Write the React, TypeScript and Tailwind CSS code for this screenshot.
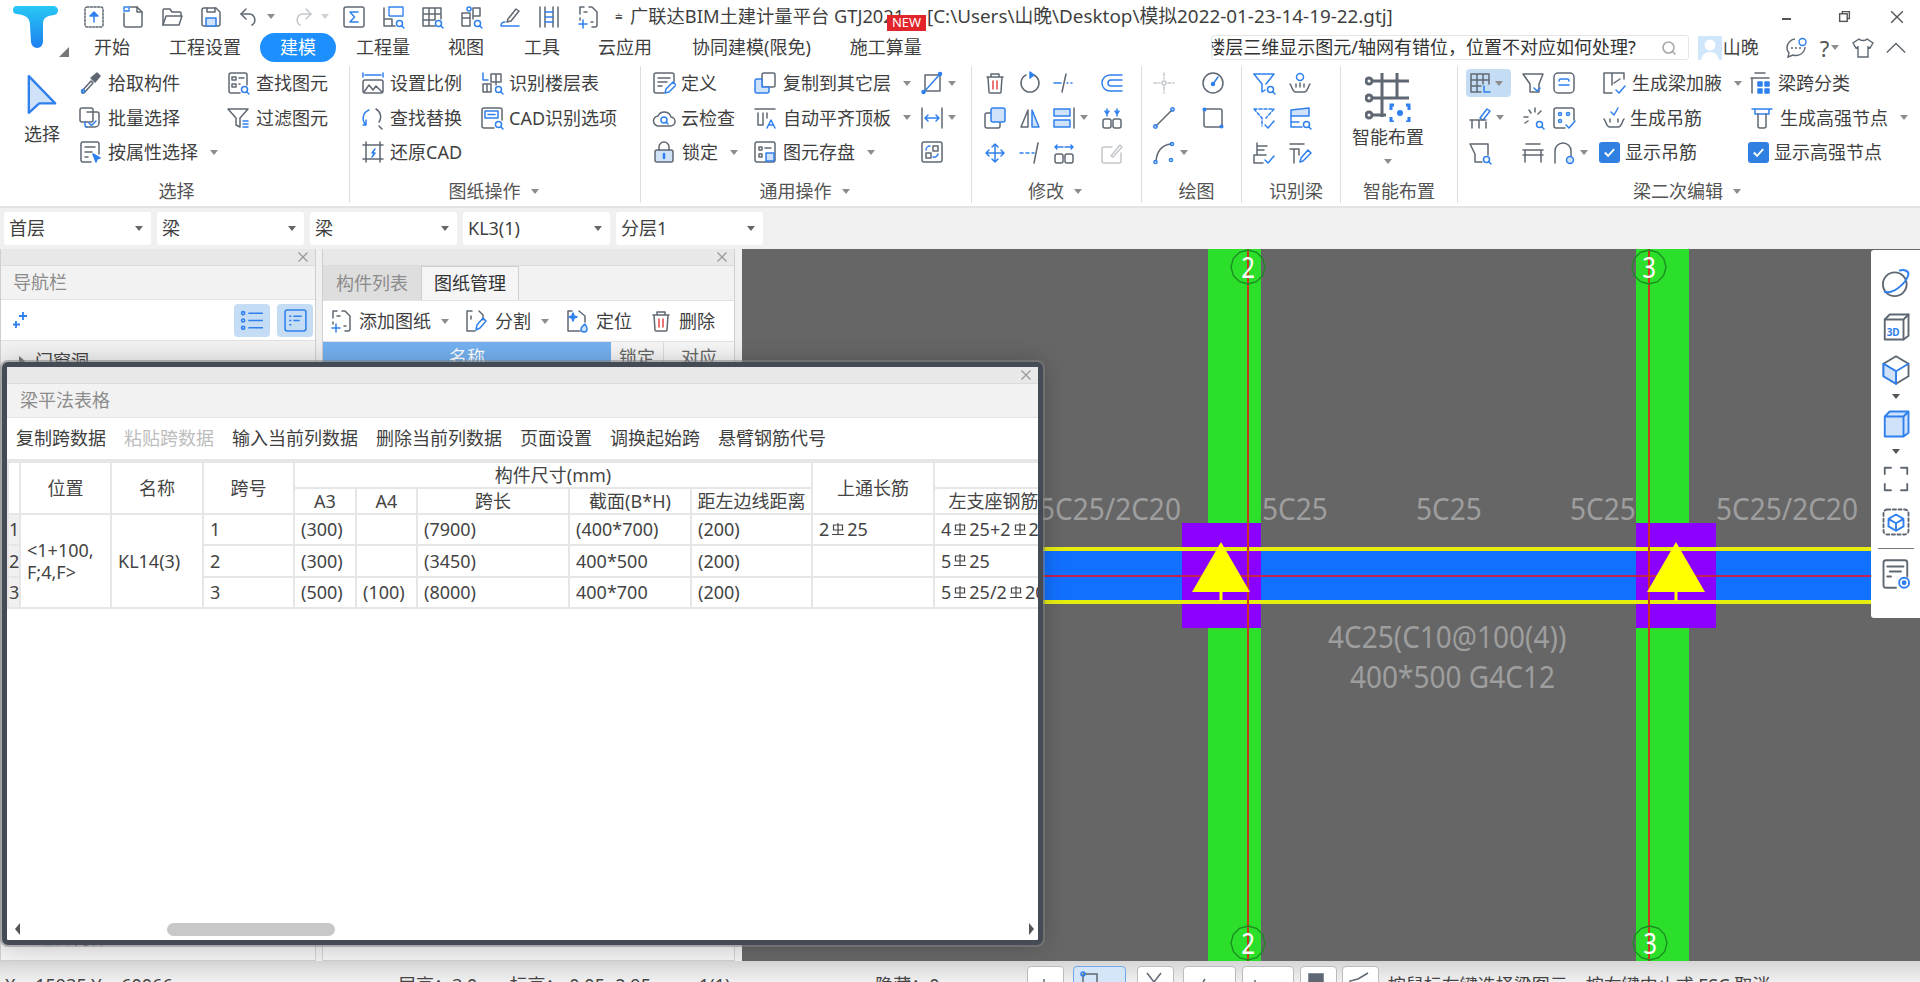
import type { ReactNode } from "react";

const BLUE = "#2f80ed";
const PALE = "#cfe2fa";
const RED = "#e5484d";

function Ic({ size = 24, children, light }: { size?: number; children: ReactNode; light?: boolean }) {
	return (
		<svg
			viewBox="0 0 24 24"
			width={size}
			height={size}
			fill="none"
			stroke={light ? "#c4c8cc" : "#5f6872"}
			strokeWidth={1.5}
			strokeLinecap="round"
			strokeLinejoin="round"
			className="shrink-0"
		>
			{children}
		</svg>
	);
}

const searchMark = (
	<>
		<circle cx="18.5" cy="18.5" r="3" stroke={BLUE} />
		<path d="M20.7 20.7L23 23" stroke={BLUE} />
	</>
);

const icons = {
	upload: (
		<>
			<rect x="3" y="2" width="18" height="20" rx="2" strokeDasharray="2 1.5" />
			<path d="M12 17V9M8 11l4-4 4 4z" stroke={BLUE} fill={BLUE} />
		</>
	),
	newDoc: (
		<>
			<path d="M9 2h7l5 5v13a2 2 0 0 1-2 2H5a2 2 0 0 1-2-2V8" />
			<path d="M16 2v5h5" />
			<rect x="3" y="2" width="5" height="4" stroke={BLUE} strokeDasharray="1 1" />
		</>
	),
	folder: (
		<>
			<path d="M3 20V5a1 1 0 0 1 1-1h6l2 3h8a1 1 0 0 1 1 1v3" />
			<path d="M3 20l3-9h16l-3 9z" />
		</>
	),
	save: (
		<>
			<path d="M5 3h12l4 4v12a2 2 0 0 1-2 2H5a2 2 0 0 1-2-2V5a2 2 0 0 1 2-2z" />
			<path d="M8 3v4h8V3" />
			<rect x="7" y="13" width="10" height="8" stroke={BLUE} fill={PALE} />
		</>
	),
	undo: (
		<>
			<path d="M9 4L4 9l5 5" />
			<path d="M4 9h9a6 6 0 0 1 2 11" />
		</>
	),
	redo: (
		<>
			<path d="M15 4l5 5-5 5" />
			<path d="M20 9h-9a6 6 0 0 0-2 11" />
		</>
	),
	sigma: (
		<>
			<rect x="2" y="2" width="20" height="20" rx="2" />
			<path d="M16 7H8l4.5 5L8 17h8" stroke={BLUE} />
		</>
	),
	sheetFind: (
		<>
			<path d="M3 3v18h11M3 14h8v7" />
			<rect x="8" y="2" width="14" height="9" stroke={BLUE} strokeDasharray="1.5 1" />
			{searchMark}
		</>
	),
	gridFind: (
		<>
			<path d="M15 21H3V3h18v11M3 9h18M3 15h12M9 3v18M15 3v12" />
			{searchMark}
		</>
	),
	gridL: (
		<>
			<path d="M13 21H3V3h18v10M3 9h18M3 15h10M9 3v18M15 3v10" />
			<path d="M16 15v6h6" stroke={BLUE} />
		</>
	),
	axisFind: (
		<>
			<circle cx="10" cy="4" r="2" stroke={BLUE} />
			<path d="M14 3h7v8h-7V3M3 8h8v5H3zM3 13h8v8H3zM14 11v3" />
			{searchMark}
		</>
	),
	pencilLine: (
		<>
			<path d="M10 14l8-10 3 2-8 10-4 1z" />
			<path d="M3 21h18M3 21c0-3 2-4 4-4" stroke={BLUE} />
		</>
	),
	ladder: (
		<>
			<path d="M3 2v20M21 2v20" />
			<path d="M8 2v20M16 2v20" stroke="#5f6872" />
			<path d="M8 7h8M8 12h8M8 17h8" stroke={BLUE} />
		</>
	),
	addDoc: (
		<>
			<path d="M8 2H4v7M4 13v2M13 2h3l5 5v13a2 2 0 0 1-2 2h-3" />
			<path d="M3 19h8M7 15v8" stroke={BLUE} />
			<path d="M8 7h3M15 17h2" />
		</>
	),
	picker: (
		<>
			<path d="M4 20l9-10 2 2-9 10H4z" />
			<path d="M13 7l4 4 5-6-3-3z" fill="#5f6872" />
			<circle cx="5" cy="20" r="1.5" stroke={BLUE} />
		</>
	),
	batch: (
		<>
			<rect x="2" y="2" width="13" height="14" rx="2" />
			<path d="M9 6h10a2 2 0 0 1 2 2v9a4 4 0 0 1-4 4H8" />
			<path d="M11 17l2.5 2.5L18 15" stroke={BLUE} />
			<path d="M7 16v3a2 2 0 0 0 2 2" stroke={BLUE} />
		</>
	),
	attrSelect: (
		<>
			<path d="M13 22H5a2 2 0 0 1-2-2V4a2 2 0 0 1 2-2h14a2 2 0 0 1 2 2v10" />
			<path d="M7 7h10M7 12h7M7 17h3" />
			<path d="M15 14l7 4-3 1-1 3z" fill={BLUE} stroke={BLUE} />
		</>
	),
	findEl: (
		<>
			<path d="M14 22H5a2 2 0 0 1-2-2V4a2 2 0 0 1 2-2h14a2 2 0 0 1 2 2v10" />
			<rect x="6" y="6" width="4" height="3" />
			<path d="M13 7h5M6 13h4v3H6zM13 13h1" />
			{searchMark}
		</>
	),
	filter: (
		<>
			<path d="M2 3h20l-8 9v9l-4-2v-7z" />
			<path d="M17 15h5M17 18h5M17 21h5" stroke={BLUE} />
		</>
	),
	scale: (
		<>
			<path d="M2 2v4M22 2v4M4 4h16" stroke={BLUE} />
			<rect x="2" y="9" width="20" height="13" rx="2" />
			<path d="M3 21l5-7 4 5 3-4 6 6" />
		</>
	),
	floorTable: (
		<>
			<path d="M3 2v7h5" stroke={BLUE} />
			<path d="M11 3h10v8H11zM16 3v8M3 13h8v8H3zM7 13v8M16 11v3" />
			{searchMark}
		</>
	),
	replace: (
		<>
			<path d="M8 4a9 9 0 0 0-3 15M5 14v5H2" stroke={BLUE} />
			<path d="M15 3a9 9 0 0 1 3 13M18 20l3 3" />
		</>
	),
	cadOpt: (
		<>
			<path d="M14 22H4a2 2 0 0 1-2-2V4a2 2 0 0 1 2-2h16a2 2 0 0 1 2 2v10" />
			<rect x="5" y="5" width="13" height="7" stroke={BLUE} />
			<path d="M8 8.500h7" stroke={BLUE} strokeDasharray="2 1" />
			{searchMark}
		</>
	),
	restore: (
		<>
			<path d="M5 2v20M19 2v20M2 5h20M2 19h20" />
			<path d="M14 9l-3 4h3l-3 4" stroke={BLUE} fill={BLUE} />
		</>
	),
	define: (
		<>
			<path d="M12 22H4a2 2 0 0 1-2-2V4a2 2 0 0 1 2-2h16a2 2 0 0 1 2 2v7" />
			<path d="M6 7h12M6 11h9M6 15h4" />
			<path d="M13 22l1-4 7-7 3 3-7 7z" stroke={BLUE} />
		</>
	),
	cloud: (
		<>
			<path d="M7 20a5 5 0 0 1-1-10 7 7 0 0 1 13 1 4.500 4.500 0 0 1-1 9z" />
			<circle cx="12" cy="14" r="3" stroke={BLUE} />
			<path d="M14 16l2 2" stroke={BLUE} />
		</>
	),
	lock: (
		<>
			<rect x="3" y="10" width="18" height="12" rx="2" fill={PALE} />
			<path d="M7 10V7a5 5 0 0 1 10 0v3" />
			<path d="M12 14v4" stroke={BLUE} strokeWidth="2.500" />
		</>
	),
	copyFloor: (
		<>
			<rect x="9" y="2" width="13" height="14" rx="2" />
			<path d="M8 8H4a2 2 0 0 0-2 2v10a2 2 0 0 0 2 2h10a2 2 0 0 0 2-2v-4H9V8z" stroke={BLUE} fill={PALE} />
		</>
	),
	align: (
		<>
			<path d="M2 3h20M5 7v12M10 7v12M5 19h5M14 7v5" />
			<path d="M14 22l4-8 4 8M15.500 19h5" stroke={BLUE} />
		</>
	),
	store: (
		<>
			<rect x="2" y="2" width="20" height="20" rx="2" />
			<path d="M6 7h3v3H6zM12 8h6M6 14h3v3H6z" />
			<rect x="13" y="13" width="8" height="8" stroke={BLUE} fill={PALE} />
		</>
	),
	crop: (
		<>
			<path d="M5 4h15v16H5z" />
			<path d="M3 22L21 2" stroke={BLUE} />
			<circle cx="3.500" cy="21" r="1.500" fill={BLUE} stroke={BLUE} />
			<circle cx="20" cy="3" r="1.500" fill={BLUE} stroke={BLUE} />
		</>
	),
	width: (
		<>
			<path d="M2 2v20M22 2v20" />
			<path d="M5 12h14M8 9l-3 3 3 3M16 9l3 3-3 3" stroke={BLUE} />
		</>
	),
	swap: (
		<>
			<rect x="2" y="2" width="20" height="20" rx="2" />
			<rect x="13" y="6" width="5" height="5" />
			<rect x="6" y="13" width="5" height="5" />
			<path d="M6 10a4 4 0 0 1 4-4M13 17a4 4 0 0 0 5-3" stroke={BLUE} />
		</>
	),
	trash: (
		<>
			<path d="M4 6h16M8 6V3h8v3M5 6l1 15a1 1 0 0 0 1 1h10a1 1 0 0 0 1-1l1-15" />
			<path d="M10 10v8M14 10v8" stroke={RED} />
		</>
	),
	rotate: (
		<>
			<path d="M8 4a9 9 0 1 0 8 0" />
			<path d="M12 1l4 3-4 3z" fill={BLUE} stroke={BLUE} />
		</>
	),
	trim: (
		<>
			<path d="M2 12h7M15 12h1M19 12h1" stroke={BLUE} />
			<path d="M14 3l-4 18" />
		</>
	),
	offset: (
		<>
			<path d="M22 4H10a8 8 0 0 0 0 16h12" stroke={BLUE} />
			<path d="M22 9H11a3 3 0 0 0 0 6h11" stroke={BLUE} />
		</>
	),
	copyEl: (
		<>
			<rect x="2" y="7" width="15" height="15" rx="2" />
			<rect x="8" y="2" width="14" height="14" rx="2" stroke={BLUE} fill={PALE} />
		</>
	),
	mirror: (
		<>
			<path d="M10 4L3 21h7z" />
			<path d="M14 4l7 17h-7z" stroke={BLUE} fill={PALE} />
		</>
	),
	stack: (
		<>
			<rect x="2" y="3" width="16" height="7" stroke={BLUE} fill={PALE} />
			<rect x="2" y="14" width="16" height="7" stroke={BLUE} fill={PALE} />
			<path d="M22 2v20" />
		</>
	),
	spread: (
		<>
			<rect x="3" y="13" width="8" height="9" rx="2" />
			<rect x="13" y="13" width="8" height="9" rx="2" />
			<path d="M7 3v7M17 3v7M5 5l2 3 2-3M15 5l2 3 2-3" stroke={BLUE} />
		</>
	),
	move: (
		<path
			d="M12 3v18M3 12h18M9 6l3-3 3 3M9 18l3 3 3-3M6 9l-3 3 3 3M18 9l3 3-3 3"
			stroke={BLUE}
		/>
	),
	extend: (
		<>
			<path d="M2 12h3M8 12h3M14 12h2" stroke={BLUE} />
			<path d="M20 2l-4 20" />
		</>
	),
	gather: (
		<>
			<rect x="3" y="13" width="8" height="9" rx="2" />
			<rect x="13" y="13" width="8" height="9" rx="2" />
			<path d="M3 6h8M13 6h8M5 4L3 6l2 2M19 4l2 2-2 2" stroke={BLUE} />
		</>
	),
	editOff: (
		<>
			<path d="M21 12v8a2 2 0 0 1-2 2H4a2 2 0 0 1-2-2V8a2 2 0 0 1 2-2h8" />
			<path d="M11 15l9-11 2 2-9 10z" />
		</>
	),
	point: (
		<>
			<path d="M12 2v6M12 16v6M2 12h6M16 12h6" strokeDasharray="3 2" />
			<circle cx="12" cy="12" r="2" />
		</>
	),
	gauge: (
		<>
			<circle cx="12" cy="12" r="10" />
			<path d="M12 13l5-7" stroke={BLUE} />
			<circle cx="12" cy="13" r="1.500" fill={BLUE} stroke={BLUE} />
		</>
	),
	line: (
		<>
			<path d="M4 20L20 4" />
			<circle cx="3.500" cy="20.500" r="1.700" stroke={BLUE} />
			<circle cx="20.500" cy="3.500" r="1.700" stroke={BLUE} />
		</>
	),
	rect: (
		<>
			<rect x="3" y="3" width="18" height="18" rx="2" />
			<circle cx="3.500" cy="3.500" r="1.300" fill={BLUE} stroke={BLUE} />
			<circle cx="20.500" cy="20.500" r="1.300" fill={BLUE} stroke={BLUE} />
		</>
	),
	arc: (
		<>
			<path d="M4 20C5 10 10 4 19 3" />
			<circle cx="3.500" cy="21" r="1.600" stroke={BLUE} />
			<circle cx="20" cy="3" r="1.600" stroke={BLUE} />
			<circle cx="19" cy="19" r="1.600" stroke={BLUE} />
		</>
	),
	filterFind: (
		<>
			<path d="M2 3h20l-8 10" stroke={BLUE} />
			<path d="M2 3l8 10v8l3-2" stroke={BLUE} />
			{searchMark}
		</>
	),
	dashedCheck: (
		<>
			<path d="M2 3h20l-8 9M2 3l8 9v8" stroke={BLUE} strokeDasharray="3 2" />
			<path d="M13 19l3 3 6-7" stroke={BLUE} />
		</>
	),
	basket: (
		<>
			<circle cx="12" cy="6" r="3.500" stroke={BLUE} />
			<path d="M2 13c2 2 2 8 6 8h8c4 0 4-6 6-8M8 13v3M16 13v3M12 12v4" />
		</>
	),
	cardFind: (
		<>
			<path d="M3 4l18-2v8H3z" stroke={BLUE} fill={PALE} />
			<path d="M3 10v11h11M3 16h8" stroke={BLUE} />
			{searchMark}
		</>
	),
	elCheck: (
		<>
			<path d="M5 2v12M5 5h10M5 9h7M2 14h12M2 14v8h9" />
			<path d="M13 19l3 3 6-7" stroke={BLUE} />
		</>
	),
	lineEdit: (
		<>
			<path d="M2 3h14M2 8h9M6 8v14M11 8v6" />
			<path d="M12 21l1-4 7-8 3 3-8 8z" stroke={BLUE} />
		</>
	),
	mergeBeam: (
		<>
			<path d="M2 3h20l-4 10v8H9v-8z" />
			<path d="M13 17l3 3 3-3" stroke={BLUE} />
		</>
	),
	roundBox: (
		<>
			<rect x="2" y="2" width="20" height="20" rx="4" />
			<path d="M7 10a2 2 0 0 1 2-2h6a2 2 0 0 1 2 2M7 14h10" stroke={BLUE} />
		</>
	),
	drawBeam: (
		<>
			<path d="M12 12l7-9 3 2-7 9z" stroke={BLUE} />
			<path d="M2 14h16M4 14v8M11 14v8M18 16v6" />
		</>
	),
	spark: (
		<>
			<path d="M8 4l2 3M14 2v4M20 5l-3 3M3 11h4M4 17l3-2" />
			{searchMark}
		</>
	),
	dotBox: (
		<>
			<path d="M13 22H4a2 2 0 0 1-2-2V4a2 2 0 0 1 2-2h16a2 2 0 0 1 2 2v10" />
			<circle cx="8" cy="8" r="1.500" stroke={BLUE} />
			<circle cx="16" cy="8" r="1.500" stroke={BLUE} />
			<circle cx="8" cy="15" r="1.500" stroke={BLUE} />
			<path d="M14 19l3 3 6-7" stroke={BLUE} />
		</>
	),
	shapeFind: (
		<>
			<path d="M2 3h18v11M2 3l5 10v8h7" />
			{searchMark}
		</>
	),
	beamLine: <path d="M5 3h14M2 9h20M4 9v12M20 9v12M2 14h20" />,
	hook: (
		<>
			<path d="M3 15V10a8 8 0 0 1 16 0v5M3 15v7" />
			<circle cx="18" cy="19" r="3.500" stroke={BLUE} fill={PALE} />
		</>
	),
	haunch: (
		<>
			<path d="M2 2h20M2 2v20h8M10 2v12M22 2v6M12 12l6-4" />
			<path d="M14 19l3 3 6-7" stroke={BLUE} />
		</>
	),
	genHook: (
		<>
			<path d="M2 13c2 2 2 8 6 8h8c4 0 4-6 6-8M8 13v3M16 13v3" />
			<path d="M9 6l3 3 4-7" stroke={BLUE} />
		</>
	),
	classify: (
		<>
			<path d="M6 2h10M2 7h18M3 7v15M10 12h0" />
			<rect x="9" y="11" width="4" height="4" fill={BLUE} stroke={BLUE} />
			<rect x="16" y="11" width="4" height="4" fill={BLUE} stroke={BLUE} />
			<rect x="9" y="18" width="4" height="4" fill={BLUE} stroke={BLUE} />
			<rect x="16" y="18" width="4" height="4" fill={BLUE} stroke={BLUE} />
		</>
	),
	node: (
		<>
			<path d="M2 3h20M5 8h14M5 3v5M19 3v5" stroke={BLUE} />
			<path d="M8 8v12a2 2 0 0 0 2 2h4a2 2 0 0 0 2-2V8" />
		</>
	),
	orbit: (
		<>
			<circle cx="11" cy="13" r="9.500" />
			<path d="M3 19C9 21 20 13 22 5c0-3-4-4-7-3" stroke={BLUE} />
		</>
	),
	box3d: (
		<>
			<path d="M7 2h15v17l-4 3H3V6z" />
			<path d="M3 6h15v16M18 6l4-4" />
			<text x="4.500" y="19" fontSize="8" fontWeight="700" fill={BLUE} stroke="none" fontFamily="Noto Sans">3D</text>
		</>
	),
	hexCube: (
		<>
			<path d="M12 1l10 6v10l-10 6-10-6V7z" />
			<path d="M12 13v10M2 7l10 6 10-6" stroke={BLUE} />
			<path d="M2 7l10 6v10L2 17z" stroke={BLUE} fill={PALE} />
		</>
	),
	blueBox: (
		<path d="M7 2h15v17l-4 3H3V6zM3 6h15v16M18 6l4-4" stroke={BLUE} fill={PALE} />
	),
	corners: <path d="M3 8V3h5M16 3h5v5M3 16v5h5M21 16v5h-5" />,
	dashCube: (
		<>
			<rect x="2" y="2" width="20" height="20" rx="3" strokeDasharray="2.500 2" />
			<path d="M12 6l6 3.500v6L12 19l-6-3.500v-6zM6 9.500l6 3.500 6-3.500M12 13v6" stroke={BLUE} />
		</>
	),
	listEye: (
		<>
			<path d="M12 23H4a2 2 0 0 1-2-2V3a2 2 0 0 1 2-2h15a2 2 0 0 1 2 2v11" />
			<path d="M5 6h13M7 10h9M5 14h3" />
			<circle cx="18.500" cy="19" r="4" stroke={BLUE} />
			<circle cx="18.500" cy="19" r="1.200" fill={BLUE} stroke={BLUE} />
		</>
	),
	split: (
		<>
			<path d="M9 2H4v20h8M16 2l4 4v5M8 7v3" />
			<path d="M13 21l1-5 6-7 3 3-6 7z" stroke={BLUE} />
		</>
	),
	locate: (
		<>
			<path d="M7 2H3v20h12M14 2l6 5v6M3 7" />
			<path d="M8 4l1 3 3 1-3 1-1 3-1-3-3-1 3-1z" stroke={BLUE} fill={BLUE} />
			<path d="M20 15c1 2 2 3 2 5a3 3 0 0 1-6 0c0-2 2-3 4-5z" stroke={BLUE} fill={PALE} />
		</>
	),
};

type IconName = keyof typeof icons;

function Caret({ className = "" }: { className?: string }) {
	return <span className={`h-0 w-0 shrink-0 border-x-[4px] border-t-[5px] border-x-transparent border-t-[#8d8d8d] ${className}`} />;
}

function Item({ icon, label, arrow, gap = "gap-[6px]", light }: { icon: IconName; label: string; arrow?: boolean; gap?: string; light?: boolean }) {
	return (
		<div className={`flex h-[34.5px] items-center whitespace-nowrap ${gap}`}>
			<Ic light={light}>{icons[icon]}</Ic>
			<span>{label}</span>
			{arrow && <Caret className="ml-[6px]" />}
		</div>
	);
}

function Tool({ icon, arrow, light }: { icon: IconName; arrow?: boolean; light?: boolean }) {
	return (
		<div className="flex h-[34.5px] items-center gap-[4px]">
			<Ic light={light}>{icons[icon]}</Ic>
			{arrow && <Caret />}
		</div>
	);
}

function Check({ label }: { label: string }) {
	return (
		<div className="flex h-[34.5px] items-center gap-[5px] whitespace-nowrap">
			<span className="flex h-[21px] w-[21px] items-center justify-center rounded-[3px] bg-[#2f80e0]">
				<svg viewBox="0 0 16 16" width="15" height="15" fill="none" stroke="#fff" strokeWidth="2">
					<path d="M3 8l3.500 3.500L13 4.500" />
				</svg>
			</span>
			<span>{label}</span>
		</div>
	);
}

function Group({ className, label, arrow, children }: { className: string; label: string; arrow?: boolean; children: ReactNode }) {
	return (
		<div className={`mt-[3px] mb-[6px] flex h-[137px] flex-col border-r border-[#dedede] ${className}`}>
			<div className="flex h-[104px] flex-1">{children}</div>
			<div className={`flex h-[33px] items-center justify-center gap-[10px] pt-[9px] text-[#555] ${arrow ? "pr-[14px]" : ""}`}>
				<span>{label}</span>
				{arrow && <Caret />}
			</div>
		</div>
	);
}

function Ribbon() {
	return (
		<div className="flex h-[146px] shrink-0 border-b-2 border-[#e4e4e4] bg-white pt-[1px]">
			<Group className="w-[350px] pl-[4px]" label="选择">
				<div className="flex w-[74px] flex-col items-center pt-[7px] pl-[2px]">
					<svg viewBox="0 0 34 44" width="32" height="42" className="shrink-0">
						<path d="M3 3L31 32L14 32L3 42Z" fill={PALE} stroke={BLUE} strokeWidth="2.500" strokeLinejoin="round" />
					</svg>
					<span className="mt-[8px]">选择</span>
				</div>
				<div className="w-[148px]">
					<Item icon="picker" label="拾取构件" />
					<Item icon="batch" label="批量选择" />
					<Item icon="attrSelect" label="按属性选择" arrow />
				</div>
				<div>
					<Item icon="findEl" label="查找图元" />
					<Item icon="filter" label="过滤图元" />
				</div>
			</Group>
			<Group className="w-[291px] pl-[11px]" label="图纸操作" arrow>
				<div className="w-[119px]">
					<Item icon="scale" label="设置比例" gap="gap-[5px]" />
					<Item icon="replace" label="查找替换" gap="gap-[5px]" />
					<Item icon="restore" label="还原CAD" gap="gap-[5px]" />
				</div>
				<div>
					<Item icon="floorTable" label="识别楼层表" gap="gap-[5px]" />
					<Item icon="cadOpt" label="CAD识别选项" gap="gap-[5px]" />
				</div>
			</Group>
			<Group className="w-[331px] pl-[11px]" label="通用操作" arrow>
				<div className="w-[101px]">
					<Item icon="define" label="定义" gap="gap-[5px]" />
					<Item icon="cloud" label="云检查" gap="gap-[5px]" />
					<Item icon="lock" label="锁定" arrow gap="gap-[6px]" />
				</div>
				<div className="w-[167px]">
					<Item icon="copyFloor" label="复制到其它层" arrow />
					<Item icon="align" label="自动平齐顶板" arrow />
					<Item icon="store" label="图元存盘" arrow />
				</div>
				<div>
					<Tool icon="crop" arrow />
					<Tool icon="width" arrow />
					<Tool icon="swap" />
				</div>
			</Group>
			<Group className="w-[170px] pl-[11px]" label="修改" arrow>
				<div className="grid h-[104px] grid-cols-[35px_34px_48px_24px]">
					<Tool icon="trash" />
					<Tool icon="rotate" />
					<Tool icon="trim" />
					<Tool icon="offset" />
					<Tool icon="copyEl" />
					<Tool icon="mirror" />
					<Tool icon="stack" arrow />
					<Tool icon="spread" />
					<Tool icon="move" />
					<Tool icon="extend" />
					<Tool icon="gather" />
					<Tool icon="editOff" light />
				</div>
			</Group>
			<Group className="w-[100px] pl-[10px]" label="绘图">
				<div className="grid h-[104px] grid-cols-[49px_24px]">
					<Tool icon="point" light />
					<Tool icon="gauge" />
					<Tool icon="line" />
					<Tool icon="rect" />
					<Tool icon="arc" arrow />
				</div>
			</Group>
			<Group className="w-[99px] pl-[10px]" label="识别梁">
				<div className="grid h-[104px] grid-cols-[36px_24px]">
					<Tool icon="filterFind" />
					<Tool icon="basket" />
					<Tool icon="dashedCheck" />
					<Tool icon="cardFind" />
					<Tool icon="elCheck" />
					<Tool icon="lineEdit" />
				</div>
			</Group>
			<Group className="w-[117px]" label="智能布置">
				<div className="flex w-full flex-col items-center pt-[6px] pr-[22px]">
					<svg viewBox="0 0 46 50" width="46" height="50" fill="none" stroke="#5f6872" strokeWidth="3" className="shrink-0">
						<circle cx="4" cy="9" r="3" />
						<circle cx="4" cy="26" r="3" />
						<circle cx="4" cy="43" r="3" />
						<path d="M7 9h37M7 26h37M7 43h14M17 1v44M32 1v24" />
						<path d="M29 33h-3v5M41 33h3v5M29 50h-3v-5M41 50h3v-5" stroke={BLUE} />
						<circle cx="35" cy="41" r="1.500" fill={BLUE} stroke={BLUE} />
					</svg>
					<span className="mt-[4px] whitespace-nowrap">智能布置</span>
					<Caret className="mt-[10px]" />
				</div>
			</Group>
			<Group className="flex-1 border-r-0 pl-[10px]" label="梁二次编辑" arrow>
				<div className="grid h-[104px] w-[131px] grid-cols-[53px_31px_47px]">
					<div className="flex h-[34.5px] items-center">
						<span className="-ml-[2px] flex h-[28px] w-[45px] items-center gap-[3px] rounded-[4px] bg-[#c5dcf5] pl-[2px]">
							<Ic>{icons.gridL}</Ic>
							<Caret />
						</span>
					</div>
					<Tool icon="mergeBeam" />
					<Tool icon="roundBox" />
					<Tool icon="drawBeam" arrow />
					<Tool icon="spark" />
					<Tool icon="dotBox" />
					<Tool icon="shapeFind" />
					<Tool icon="beamLine" />
					<Tool icon="hook" arrow />
				</div>
				<div className="w-[149px]">
					<div className="pl-[3px]">
						<Item icon="haunch" label="生成梁加腋" arrow />
					</div>
					<div className="pl-[3px]">
						<Item icon="genHook" label="生成吊筋" gap="gap-[4px]" />
					</div>
					<Check label="显示吊筋" />
				</div>
				<div>
					<div className="pl-[1px]">
						<Item icon="classify" label="梁跨分类" gap="gap-[5px]" />
					</div>
					<div className="pl-[2px]">
						<Item icon="node" label="生成高强节点" arrow />
					</div>
					<Check label="显示高强节点" />
				</div>
			</Group>
		</div>
	);
}

function TitleBar() {
	const tools: IconName[] = ["upload", "newDoc", "folder", "save"];
	const after: IconName[] = ["sigma", "sheetFind", "gridFind", "axisFind", "pencilLine", "ladder", "addDoc"];
	return (
		<div className="flex h-[33px] items-center">
			<div className="flex pl-[4px]">
				{tools.map((name) => (
					<div key={name} className="flex w-[39px] justify-center">
						<Ic>{icons[name]}</Ic>
					</div>
				))}
				<div className="flex w-[54px] items-center gap-[6px] pl-[7px]">
					<Ic>{icons.undo}</Ic>
					<Caret />
				</div>
				<div className="flex w-[50px] items-center gap-[6px] pl-[7px]">
					<Ic light>{icons.redo}</Ic>
					<Caret className="opacity-40" />
				</div>
				{after.map((name) => (
					<div key={name} className="flex w-[39px] justify-center">
						<Ic>{icons[name]}</Ic>
					</div>
				))}
			</div>
			<span className="ml-[8px] text-[13px] leading-none text-[#555]">⩧</span>
			<div className="relative ml-[7px] flex items-center whitespace-nowrap text-[#3f3f3f]">
				<span className="w-[297px] text-[18.3px]">广联达BIM土建计量平台 GTJ2021</span>
				<span className="text-[18.85px]">[C:\Users\山晚\Desktop\模拟2022-01-23-14-19-22.gtj]</span>
				<span className="absolute top-[10px] left-[257px] flex h-[16px] w-[39px] items-center justify-center bg-[#e2242b] text-[13px] leading-none text-white">NEW</span>
			</div>
			<div className="ml-auto flex items-center pr-[16px]">
				<span className="mt-[5px] h-[2px] w-[9px] bg-[#555]" />
				<svg viewBox="0 0 12 12" width="13" height="13" fill="none" stroke="#555" strokeWidth="1.300" className="ml-[47px]">
					<rect x="1.500" y="3.500" width="7" height="7" />
					<path d="M4 3.500V1.500h6.500V8H8.500" />
				</svg>
				<svg viewBox="0 0 12 12" width="14" height="14" fill="none" stroke="#555" strokeWidth="1.200" className="ml-[39px]">
					<path d="M1 1l10 10M11 1L1 11" />
				</svg>
			</div>
		</div>
	);
}

function TabsBar() {
	return (
		<div className="flex h-[29px] items-center whitespace-nowrap pl-[24px] text-[#3f3f3f]">
			<span>开始</span>
			<span className="ml-[39px]">工程设置</span>
			<span className="ml-[19px] flex h-[29px] w-[76px] items-center justify-center rounded-full bg-[#1d8fff] text-white">建模</span>
			<span className="ml-[20px]">工程量</span>
			<span className="ml-[38px]">视图</span>
			<span className="ml-[40px]">工具</span>
			<span className="ml-[38px]">云应用</span>
			<span className="ml-[40px]">协同建模(限免)</span>
			<span className="ml-[39px]">施工算量</span>
			<div className="ml-[289px] flex h-[25px] w-[478px] items-center overflow-hidden rounded-[3px] border border-[#e6e6e6] bg-white text-[#333]">
				<span className="flex w-[424px] shrink-0 justify-end overflow-hidden">
					<span className="shrink-0">楼层三维显示图元/轴网有错位，位置不对应如何处理?</span>
				</span>
				<svg viewBox="0 0 16 16" width="16" height="16" fill="none" stroke="#a9a9a9" strokeWidth="1.600" className="ml-[25px] shrink-0">
					<circle cx="7.500" cy="7.500" r="5.500" />
					<path d="M11.500 11.500l3 3" />
				</svg>
			</div>
			<span className="ml-[9px] flex h-[24px] w-[24px] items-end justify-center bg-[#cfe6fb]">
				<svg viewBox="0 0 24 24" width="24" height="24" fill="#fff">
					<circle cx="12" cy="9" r="5.500" />
					<path d="M3 24c1-6 5-8 9-8s8 2 9 8z" />
				</svg>
			</span>
			<span className="ml-[1px] text-[#444]">山晚</span>
			<div className="ml-[25px] flex items-center">
				<svg viewBox="0 0 24 24" width="24" height="24" fill="none" stroke="#5f6872" strokeWidth="1.400">
					<path d="M11 3a9 9 0 0 0-8 9c0 2 1 4 2 5l-1 4 5-2a9 9 0 0 0 12-8" />
					<path d="M8 12h0M12 12h0M16 12h0" strokeWidth="2" strokeLinecap="round" />
					<circle cx="18.500" cy="6" r="3.500" stroke={BLUE} />
				</svg>
				<span className="ml-[12px] text-[22px] leading-none text-[#555]">?</span>
				<Caret className="ml-[2px]" />
				<svg viewBox="0 0 24 24" width="24" height="24" fill="none" stroke="#5f6872" strokeWidth="1.400" className="ml-[12px]">
					<path d="M8 3L2 7l3 5 2-1v10h10V11l2 1 3-5-6-4c-1 2-7 2-8 0z" />
				</svg>
				<svg viewBox="0 0 24 24" width="22" height="22" fill="none" stroke="#5f6872" strokeWidth="1.600" className="ml-[10px]">
					<path d="M2 17L12 7l10 10" />
				</svg>
			</div>
		</div>
	);
}

function Select({ label, className }: { label: string; className: string }) {
	return (
		<div className={`flex h-[33px] items-center justify-between rounded-[3px] bg-white pr-[8px] pl-[5px] text-[#3f3f3f] ${className}`}>
			<span>{label}</span>
			<Caret className="border-t-[#666]" />
		</div>
	);
}

function CloseX() {
	return (
		<svg viewBox="0 0 12 12" width="12" height="12" fill="none" stroke="#9a9a9a" strokeWidth="1.300">
			<path d="M1.500 1.500l9 9M10.500 1.500l-9 9" />
		</svg>
	);
}

function PanelHeader() {
	return (
		<div className="flex h-[17px] shrink-0 items-center justify-end border-b border-[#dcdcdc] bg-[#e8e8e8] pr-[6px]">
			<CloseX />
		</div>
	);
}

function NavPanel() {
	return (
		<div className="flex w-[316px] shrink-0 flex-col border border-t-0 border-[#cfcfcf] bg-[#f2f2f2]">
			<PanelHeader />
			<div className="flex h-[33px] shrink-0 items-center pl-[12px] text-[#8c8c8c]">导航栏</div>
			<div className="flex h-[42px] shrink-0 items-center justify-between border-y border-[#e2e2e2] bg-white pr-[2px] pl-[10px]">
				<svg viewBox="0 0 20 20" width="20" height="20" fill="none" stroke={BLUE} strokeWidth="1.800">
					<path d="M12 2v8M8 6h8M5 11v7M2 14.500h7" />
				</svg>
				<div className="flex gap-[7px]">
					<span className="flex h-[33px] w-[36px] items-center justify-center rounded-[4px] bg-[#c5dcf5]">
						<svg viewBox="0 0 24 24" width="25" height="25" fill="none" stroke={BLUE} strokeWidth="1.500">
							<circle cx="3" cy="5" r="1.500" />
							<circle cx="3" cy="12" r="1.500" />
							<circle cx="3" cy="19" r="1.500" />
							<path d="M8 5h14M8 12h14M8 19h14" />
						</svg>
					</span>
					<span className="flex h-[33px] w-[36px] items-center justify-center rounded-[4px] bg-[#c5dcf5]">
						<svg viewBox="0 0 24 24" width="25" height="25" fill="none" stroke={BLUE} strokeWidth="1.500">
							<rect x="2" y="2" width="20" height="20" rx="2" />
							<path d="M6 8h2M10 8h8M6 12h2M10 12h6M6 16h2" />
						</svg>
					</span>
				</div>
			</div>
			<div className="flex items-center gap-[10px] pt-[9px] pl-[18px] text-[#444]">
				<span className="h-0 w-0 border-y-[5px] border-l-[6px] border-y-transparent border-l-[#777]" />
				<span>门窗洞</span>
			</div>
			<div className="mt-auto pb-[12px] pl-[35px] text-[#666]">组合构件</div>
		</div>
	);
}

function ListPanel() {
	return (
		<div className="ml-[6px] flex w-[413px] shrink-0 flex-col border border-t-0 border-[#cfcfcf] bg-[#f2f2f2]">
			<PanelHeader />
			<div className="flex h-[34px] shrink-0 items-stretch">
				<span className="flex w-[98px] items-center justify-center bg-[#dedede] text-[#8c8c8c]">构件列表</span>
				<span className="flex w-[98px] items-center justify-center border-x border-t border-[#cfcfcf] bg-[#f5f5f5] text-[#333]">图纸管理</span>
			</div>
			<div className="flex h-[42px] shrink-0 items-center whitespace-nowrap border-y border-[#e2e2e2] bg-white pl-[6px] text-[#3f3f3f]">
				<Ic>{icons.addDoc}</Ic>
				<span className="ml-[6px]">添加图纸</span>
				<Caret className="ml-[10px]" />
				<span className="ml-[14px]">
					<Ic>{icons.split}</Ic>
				</span>
				<span className="ml-[8px]">分割</span>
				<Caret className="ml-[10px]" />
				<span className="ml-[16px]">
					<Ic>{icons.locate}</Ic>
				</span>
				<span className="ml-[7px]">定位</span>
				<span className="ml-[17px]">
					<Ic>{icons.trash}</Ic>
				</span>
				<span className="ml-[6px]">删除</span>
			</div>
			<div className="flex h-[30px] shrink-0 text-[#666]">
				<span className="flex w-[288px] items-center justify-center bg-[#74b1f0] text-white">名称</span>
				<span className="flex w-[53px] items-center justify-center border-r border-[#dcdcdc] bg-[#f6f6f6]">锁定</span>
				<span className="flex flex-1 items-center justify-center bg-[#f6f6f6]">对应</span>
			</div>
		</div>
	);
}

function Rebar() {
	return (
		<svg viewBox="0 0 14 14" width="14" height="14" fill="none" stroke="#444" strokeWidth="1.200" className="mx-[2px] -mt-[5px] inline-block">
			<path d="M2.500 3h9v5h-9zM7 1v11M1 12.500h12" />
		</svg>
	);
}

const cell = "border-2 border-[#e6e6e6] px-[6px] text-left font-normal whitespace-nowrap overflow-hidden";
const head = "border-2 border-[#e6e6e6] p-0 text-center font-normal whitespace-nowrap overflow-hidden";
const rowNo = "border-2 border-[#e6e6e6] bg-[#f0f0f0] p-0 text-center font-normal overflow-hidden";

function BeamTable() {
	return (
		<table className="w-[1045px] table-fixed border-collapse text-[#444]">
			<colgroup>
				<col className="w-[12px]" />
				<col className="w-[91px]" />
				<col className="w-[92px]" />
				<col className="w-[91px]" />
				<col className="w-[62px]" />
				<col className="w-[61px]" />
				<col className="w-[152px]" />
				<col className="w-[122px]" />
				<col className="w-[121px]" />
				<col className="w-[122px]" />
				<col className="w-[119px]" />
			</colgroup>
			<thead>
				<tr className="h-[26px]">
					<th rowSpan={2} className={head} />
					<th rowSpan={2} className={head}>位置</th>
					<th rowSpan={2} className={head}>名称</th>
					<th rowSpan={2} className={head}>跨号</th>
					<th colSpan={5} className={head}>构件尺寸(mm)</th>
					<th rowSpan={2} className={head}>上通长筋</th>
					<th className={head} />
				</tr>
				<tr className="h-[26px]">
					<th className={head}>A3</th>
					<th className={head}>A4</th>
					<th className={head}>跨长</th>
					<th className={head}>截面(B*H)</th>
					<th className={head}>距左边线距离</th>
					<th className={head}>左支座钢筋</th>
				</tr>
			</thead>
			<tbody>
				<tr className="h-[31px]">
					<td className={rowNo}>1</td>
					<td rowSpan={3} className={cell}>
						&lt;1+100,
						<br />
						F;4,F&gt;
					</td>
					<td rowSpan={3} className={cell}>KL14(3)</td>
					<td className={cell}>1</td>
					<td className={cell}>(300)</td>
					<td className={cell} />
					<td className={cell}>(7900)</td>
					<td className={cell}>(400*700)</td>
					<td className={cell}>(200)</td>
					<td className={cell}>2<Rebar />25</td>
					<td className={cell}>4<Rebar />25+2<Rebar />25</td>
				</tr>
				<tr className="h-[32px]">
					<td className={rowNo}>2</td>
					<td className={cell}>2</td>
					<td className={cell}>(300)</td>
					<td className={cell} />
					<td className={cell}>(3450)</td>
					<td className={cell}>400*500</td>
					<td className={cell}>(200)</td>
					<td className={cell} />
					<td className={cell}>5<Rebar />25</td>
				</tr>
				<tr className="h-[31px]">
					<td className={rowNo}>3</td>
					<td className={cell}>3</td>
					<td className={cell}>(500)</td>
					<td className={cell}>(100)</td>
					<td className={cell}>(8000)</td>
					<td className={cell}>400*700</td>
					<td className={cell}>(200)</td>
					<td className={cell} />
					<td className={cell}>5<Rebar />25/2<Rebar />20</td>
				</tr>
			</tbody>
		</table>
	);
}

function TableDialog() {
	return (
		<div className="absolute top-[362px] left-[2px] flex h-[583px] w-[1041px] flex-col overflow-hidden rounded-[6px] border-[5px] border-[#454b55] bg-white shadow-[0_0_0_2px_rgba(130,130,130,0.55),0_0_24px_rgba(0,0,0,0.22)]">
			<div className="flex h-[17px] shrink-0 items-center justify-end border-b border-[#dcdcdc] bg-[#e8e8e8] pr-[6px]">
				<CloseX />
			</div>
			<div className="flex h-[34px] shrink-0 items-center border-b border-[#e4e4e4] bg-[#f2f2f2] pl-[13px] text-[#8c8c8c]">梁平法表格</div>
			<div className="flex h-[43px] shrink-0 items-center gap-[18px] whitespace-nowrap border-b-2 border-[#e6e6e6] pl-[9px] text-[#3f3f3f]">
				<span>复制跨数据</span>
				<span className="text-[#bdbdbd]">粘贴跨数据</span>
				<span>输入当前列数据</span>
				<span>删除当前列数据</span>
				<span>页面设置</span>
				<span>调换起始跨</span>
				<span>悬臂钢筋代号</span>
			</div>
			<div className="flex-1 overflow-hidden">
				<BeamTable />
			</div>
			<div className="flex h-[22px] shrink-0 items-center pr-[4px] pl-[8px]">
				<span className="h-0 w-0 border-y-[6px] border-r-[5px] border-y-transparent border-r-[#555]" />
				<span className="ml-[147px] h-[13px] w-[168px] rounded-full bg-[#c8c8c8]" />
				<span className="ml-auto h-0 w-0 border-y-[6px] border-l-[5px] border-y-transparent border-l-[#555]" />
			</div>
		</div>
	);
}

function AxisMark({ n, className }: { n: number; className: string }) {
	return (
		<div className={`absolute flex h-[36px] w-[36px] items-center justify-center ${className}`}>
			<svg viewBox="0 0 36 36" width="36" height="36" fill="none" stroke="#1c8a22" strokeWidth="1.300" className="absolute inset-0">
				<polygon points="18,1 26.500,3.300 32.700,9.500 35,18 32.700,26.500 26.500,32.700 18,35 9.500,32.700 3.300,26.500 1,18 3.300,9.500 9.500,3.300" />
			</svg>
			<span className="relative scale-y-[1.2] text-[24px] leading-none text-white">{n}</span>
		</div>
	);
}

function Label({ text, className }: { text: string; className: string }) {
	return <div className={`absolute origin-top scale-y-[1.12] text-[28px] leading-none whitespace-nowrap text-[#9e9e9e] ${className}`}>{text}</div>;
}

function Pile({ className }: { className: string }) {
	return (
		<svg viewBox="0 0 60 60" width="60" height="60" className={`absolute ${className}`}>
			<path d="M30 0L59 50H1Z" fill="#ffff00" />
			<path d="M30 50V59" stroke="#ffff00" strokeWidth="3" />
		</svg>
	);
}

function Canvas() {
	return (
		<div className="relative ml-[7px] flex-1 overflow-hidden bg-[#666666]">
			<div className="absolute top-0 bottom-0 left-[466px] w-[53px] bg-[#2bdf2b]" />
			<div className="absolute top-0 bottom-0 left-[894px] w-[53px] bg-[#2bdf2b]" />
			<div className="absolute top-[298px] left-0 h-[4px] w-full bg-[#e6ee10]" />
			<div className="absolute top-[302px] left-0 h-[49px] w-full bg-[#1270ff]" />
			<div className="absolute top-[351px] left-0 h-[4px] w-full bg-[#e6ee10]" />
			<div className="absolute top-[274px] left-[440px] h-[105px] w-[79px] bg-[#8c00ff]" />
			<div className="absolute top-[274px] left-[894px] h-[105px] w-[80px] bg-[#8c00ff]" />
			<div className="absolute top-[298px] left-[440px] h-[4px] w-[79px] bg-[#e6ee10]" />
			<div className="absolute top-[298px] left-[894px] h-[4px] w-[80px] bg-[#e6ee10]" />
			<div className="absolute top-[351px] left-[440px] h-[4px] w-[79px] bg-[#e6ee10]" />
			<div className="absolute top-[351px] left-[894px] h-[4px] w-[80px] bg-[#e6ee10]" />
			<div className="absolute top-[326px] left-0 h-[2px] w-full bg-[#c2234f]" />
			<div className="absolute top-0 bottom-0 left-[505px] w-[2px] bg-[#c8371e]" />
			<div className="absolute top-0 bottom-0 left-[906px] w-[2px] bg-[#c8371e]" />
			<Pile className="top-[293px] left-[449px]" />
			<Pile className="top-[293px] left-[904px]" />
			<AxisMark n={2} className="top-0 left-[488px]" />
			<AxisMark n={3} className="top-0 left-[889px]" />
			<AxisMark n={2} className="bottom-0 left-[488px]" />
			<AxisMark n={3} className="bottom-0 left-[890px]" />
			<Label text="5C25/2C20" className="top-[243px] left-[297px]" />
			<Label text="5C25" className="top-[243px] left-[520px]" />
			<Label text="5C25" className="top-[243px] left-[674px]" />
			<Label text="5C25" className="top-[243px] left-[828px]" />
			<Label text="5C25/2C20" className="top-[243px] left-[974px]" />
			<Label text="4C25(C10@100(4))" className="top-[371px] left-[586px]" />
			<Label text="400*500 G4C12" className="top-[411px] left-[608px]" />
			<SideTools />
		</div>
	);
}

function SideTools() {
	return (
		<div className="absolute top-[1px] right-0 flex h-[368px] w-[49px] flex-col items-center rounded-l-[3px] bg-white pt-[18px]">
			<Ic size={30}>{icons.orbit}</Ic>
			<div className="mt-[14px]">
				<Ic size={30}>{icons.box3d}</Ic>
			</div>
			<div className="mt-[13px]">
				<Ic size={30}>{icons.hexCube}</Ic>
			</div>
			<Caret className="mt-[9px] border-t-[#555]" />
			<div className="mt-[10px]">
				<Ic size={30}>{icons.blueBox}</Ic>
			</div>
			<Caret className="mt-[10px] border-t-[#555]" />
			<div className="mt-[10px]">
				<Ic size={30}>{icons.corners}</Ic>
			</div>
			<div className="mt-[13px]">
				<Ic size={30}>{icons.dashCube}</Ic>
			</div>
			<div className="mt-[11px] h-[1px] w-[36px] bg-[#777]" />
			<div className="mt-[10px]">
				<Ic size={30}>{icons.listEye}</Ic>
			</div>
		</div>
	);
}

function SnapButton({ className, children }: { className: string; children: ReactNode }) {
	return (
		<span className={`h-[22px] shrink-0 rounded-t-[4px] border px-[4px] pt-[2px] ${className}`}>
			<svg viewBox="0 0 24 20" width="24" height="20" fill="none" stroke="#5f6872" strokeWidth="1.500">
				{children}
			</svg>
		</span>
	);
}

function StatusBar() {
	return (
		<div className="flex h-[21px] shrink-0 items-start overflow-hidden whitespace-nowrap bg-gradient-to-b from-[#d6d6d6] to-[#f0f0f0] pl-[5px] text-[#444]">
			<div className="w-[393px] pt-[12px] leading-[24px]">X = 15935 Y = 60066</div>
			<div className="flex pt-[12px] leading-[24px]">
				<span>层高：3.0</span>
				<span className="ml-[32px]">标高：-0.05~2.95</span>
				<span className="ml-[48px]">1(1)</span>
				<span className="ml-[145px]">隐藏：0</span>
			</div>
			<div className="ml-[87px] flex gap-[6px] pt-[5px]">
				<SnapButton className="w-[37px] border-[#bbb] bg-white">
					<path d="M12 10v10" />
				</SnapButton>
				<SnapButton className="ml-[3px] w-[53px] border-[#6fa8e8] bg-[#d5e6f9]">
					<path d="M5 5h14v14M5 5v14" />
					<circle cx="5" cy="5" r="2" stroke={BLUE} />
				</SnapButton>
				<SnapButton className="ml-[5px] w-[37px] border-[#bbb] bg-white">
					<path d="M5 4l7 9 7-9" />
				</SnapButton>
				<SnapButton className="ml-[3px] w-[53px] border-[#bbb] bg-white">
					<path d="M17 10l-6 10" />
				</SnapButton>
				<SnapButton className="w-[52px] border-[#bbb] bg-white">
					<path d="M4 15h8M8 11v8" />
				</SnapButton>
				<SnapButton className="w-[37px] border-[#bbb] bg-white">
					<path d="M4 5h14v15H4z" fill="#5f6872" />
				</SnapButton>
				<SnapButton className="-ml-[1px] w-[37px] border-[#bbb] bg-white">
					<path d="M3 20v-8l8-2 10-6" />
				</SnapButton>
			</div>
			<div className="ml-[9px] pt-[12px] leading-[24px]">按鼠标左键选择梁图元，按右键中止或 ESC 取消</div>
		</div>
	);
}

export default function App() {
	return (
		<div className="relative flex h-[982px] w-[1920px] flex-col overflow-hidden bg-[#f0f0f0] font-['Noto_Sans','Noto_Sans_CJK_SC',sans-serif] text-[18px] leading-tight text-[#3f3f3f]">
			<div className="flex shrink-0 bg-white">
				<div className="relative h-[62px] w-[70px] shrink-0">
					<svg viewBox="0 0 46 44" width="46" height="44" className="absolute top-[5px] left-[12px]">
						<defs>
							<linearGradient id="logo" x1="0" y1="0" x2="0" y2="1">
								<stop offset="0" stopColor="#27c8f5" />
								<stop offset="1" stopColor="#1d7ff0" />
							</linearGradient>
						</defs>
						<path
							d="M5 1h36a4 4 0 0 1 1 9c-8 1-11 3-11 9v17c0 9-11 9-12 1l-1-17c0-7-4-10-13-11a4 4 0 0 1 0-8z"
							fill="url(#logo)"
						/>
					</svg>
					<span className="absolute top-[47px] left-[59px] h-0 w-0 border-[5px] border-t-transparent border-r-[#777] border-b-[#777] border-l-transparent" />
				</div>
				<div className="min-w-0 flex-1">
					<TitleBar />
					<TabsBar />
				</div>
			</div>
			<Ribbon />
			<div className="flex h-[41px] shrink-0 items-center gap-[6px] pl-[4px]">
				<Select label="首层" className="w-[147px]" />
				<Select label="梁" className="w-[147px]" />
				<Select label="梁" className="w-[147px]" />
				<Select label="KL3(1)" className="w-[147px]" />
				<Select label="分层1" className="w-[147px]" />
			</div>
			<div className="flex h-[712px] shrink-0">
				<NavPanel />
				<ListPanel />
				<Canvas />
			</div>
			<StatusBar />
			<TableDialog />
		</div>
	);
}
